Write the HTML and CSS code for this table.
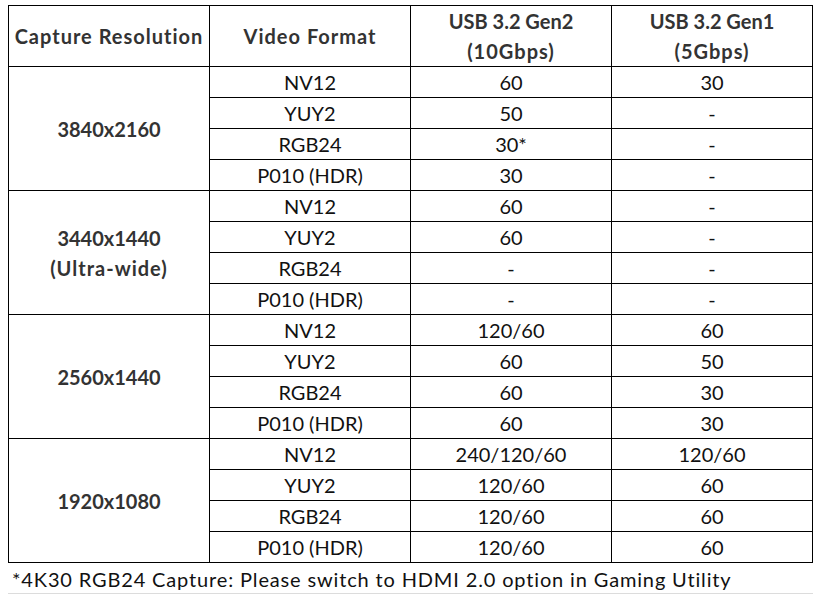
FILE: index.html
```html
<!DOCTYPE html>
<html>
<head>
<meta charset="utf-8">
<link rel="stylesheet" href="styles.css">
</head>
<body>
<div class="sheet">
  <table class="spec">
    <colgroup><col class="c"><col class="c"><col class="c"><col class="c"></colgroup>
    <thead>
      <tr><th><span class="wide">Capture Resolution</span></th><th><span class="wide">Video Format</span></th><th>USB 3.2 Gen2<br><span class="wide">(10Gbps)</span></th><th>USB 3.2 Gen1<br><span class="wide">(5Gbps)</span></th></tr>
    </thead>
    <tbody>
      <tr><th rowspan="4" class="res">3840x2160</th><td>NV12</td><td>60</td><td>30</td></tr>
      <tr><td>YUY2</td><td>50</td><td>-</td></tr>
      <tr><td>RGB24</td><td>30*</td><td>-</td></tr>
      <tr><td>P010 (HDR)</td><td>30</td><td>-</td></tr>
    </tbody>
    <tbody>
      <tr><th rowspan="4" class="res">3440x1440<br><span class="wide">(Ultra-wide)</span></th><td>NV12</td><td>60</td><td>-</td></tr>
      <tr><td>YUY2</td><td>60</td><td>-</td></tr>
      <tr><td>RGB24</td><td>-</td><td>-</td></tr>
      <tr><td>P010 (HDR)</td><td>-</td><td>-</td></tr>
    </tbody>
    <tbody>
      <tr><th rowspan="4" class="res">2560x1440</th><td>NV12</td><td>120/60</td><td>60</td></tr>
      <tr><td>YUY2</td><td>60</td><td>50</td></tr>
      <tr><td>RGB24</td><td>60</td><td>30</td></tr>
      <tr><td>P010 (HDR)</td><td>60</td><td>30</td></tr>
    </tbody>
    <tbody>
      <tr><th rowspan="4" class="res">1920x1080</th><td>NV12</td><td>240/120/60</td><td>120/60</td></tr>
      <tr><td>YUY2</td><td>120/60</td><td>60</td></tr>
      <tr><td>RGB24</td><td>120/60</td><td>60</td></tr>
      <tr><td>P010 (HDR)</td><td>120/60</td><td>60</td></tr>
    </tbody>
  </table>
  <div class="note">*4K30 RGB24 Capture: Please switch to HDMI 2.0 option in Gaming Utility</div>
</div>
</body>
</html>
```
FILE: styles.css
```css
html, body {
  margin: 0;
  padding: 0;
  background: #ffffff;
}
.sheet {
  padding: 5px 0 0 8px;
  font-family: Lato, "Liberation Sans", sans-serif;
  font-size: 20px;
  color: #111;
}
.spec {
  border-collapse: collapse;
  table-layout: fixed;
  width: 805px;
}
.spec .c {
  width: 201px;
}
.spec th,
.spec td {
  border: 1px solid #000;
  padding: 0;
  height: 30px;
  line-height: 30px;
  text-align: center;
  vertical-align: middle;
  white-space: nowrap;
}
.spec th {
  font-weight: bold;
  color: #333;
}
.wide {
  letter-spacing: 1px;
}
.note {
  width: 805px;
  height: 31px;
  line-height: 32px;
  padding-left: 4px;
  box-sizing: border-box;
  border-bottom: 1px solid #dcdcdc;
  color: #111;
  letter-spacing: 0.85px;
}
```
